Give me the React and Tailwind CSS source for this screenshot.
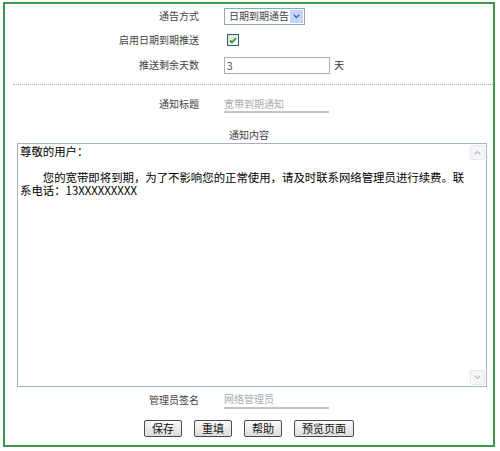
import { useState } from 'react'

const font = 'font-["Noto_Sans_CJK_SC","Noto_Sans",sans-serif]'

function Row({ label, children, className = 'h-[24px]' }) {
  return (
    <div className={`flex items-center ${className}`}>
      <div className="w-[195px] pr-[1px] text-right text-[10px] leading-none text-[#444]">{label}</div>
      <div className="ml-[24px] flex items-center">{children}</div>
    </div>
  )
}

function Chevron({ up }) {
  return (
    <svg width="7" height="5" viewBox="0 0 7 5" className={up ? 'rotate-180' : ''}>
      <path d="M0.8 0.8 L3.5 3.6 L6.2 0.8" fill="none" stroke="currentColor" strokeWidth="1.3" />
    </svg>
  )
}

function Btn({ children }) {
  return (
    <button className="h-[17px] rounded-[2px] border border-[#4a4a4a] bg-gradient-to-b from-[#fbfbfb] to-[#dcdcdc] px-[7px] text-[11px] leading-none text-[#111]">
      {children}
    </button>
  )
}

export default function App() {
  const [enabled, setEnabled] = useState(true)
  const [days, setDays] = useState('3')
  const content =
    '尊敬的用户：\n\n　　您的宽带即将到期，为了不影响您的正常使用，请及时联系网络管理员进行续费。联\n系电话：13XXXXXXXXX'

  return (
    <div className={`h-[451px] w-[500px] bg-white pl-[3px] pt-[2px] ${font}`}>
      <div className="flex h-[445px] w-[492px] flex-col border-2 border-[#3d9a4b]">
        <Row label="通告方式">
          <div className="flex h-[17px] w-[81px] items-center border border-[#8ea6c2] bg-white">
            <span className="flex-1 whitespace-nowrap pl-[4px] text-[10px] leading-none text-[#444]">日期到期通告</span>
            <span className="mr-[1px] flex h-[13px] w-[13px] items-center justify-center bg-[#c4d5fa] text-[#3a5aa8]">
              <Chevron />
            </span>
          </div>
        </Row>
        <Row label="启用日期到期推送">
          <button
            onClick={() => setEnabled(!enabled)}
            className="ml-[3px] flex h-[12px] w-[12px] items-center justify-center border border-[#2b5b7d] bg-gradient-to-br from-[#dcdcd8] to-white"
          >
            {enabled && (
              <svg width="8" height="7" viewBox="0 0 8 7">
                <path d="M1 3.5 L3 5.5 L7 1" fill="none" stroke="#22a022" strokeWidth="1.8" />
              </svg>
            )}
          </button>
        </Row>
        <Row label="推送剩余天数" className="h-[26px]">
          <input
            value={days}
            onChange={(e) => setDays(e.target.value)}
            className="h-[17px] w-[106px] border border-[#a9b3bd] px-[2px] text-[10px] leading-none text-[#444] outline-none"
          />
          <span className="ml-[4px] text-[10px] leading-none text-[#333]">天</span>
        </Row>
        <div className="ml-[8px] mt-[6px] border-t border-dotted border-[#9cbf9c]" />
        <Row label="通知标题" className="mt-[7px] h-[24px]">
          <input
            placeholder="宽带到期通知"
            className="h-[18px] w-[105px] border-b-2 border-[#c4c4c4] px-0 text-[10px] leading-none text-[#555] outline-none placeholder:text-[#aaa]"
          />
        </Row>
        <div className="mt-[11px] h-[16px] text-center text-[10px] leading-[16px] text-[#444]">通知内容</div>
        <div className="ml-[12px] flex h-[244px] w-[470px] border border-[#a4b3c3] bg-white">
          <textarea
            readOnly
            wrap="off"
            defaultValue={content}
            className="flex-1 resize-none overflow-hidden px-[2px] pt-[1px] text-[11.4px] leading-[13px] text-black outline-none"
          />
          <div className="flex w-[16px] flex-col justify-between py-[1px] pr-[1px]">
            <div className="flex h-[15px] items-center justify-center rounded-[2px] border border-[#e4e8ee] bg-[#f4f6f8] text-[#b8bec6]">
              <Chevron up />
            </div>
            <div className="flex h-[15px] items-center justify-center rounded-[2px] border border-[#e4e8ee] bg-[#f4f6f8] text-[#b8bec6]">
              <Chevron />
            </div>
          </div>
        </div>
        <Row label="管理员签名" className="h-[25px]">
          <input
            placeholder="网络管理员"
            className="h-[18px] w-[105px] border-b-2 border-[#c4c4c4] px-0 text-[10px] leading-none text-[#555] outline-none placeholder:text-[#aaa]"
          />
        </Row>
        <div className="mt-[8px] flex justify-center gap-[12px]">
          <Btn>保存</Btn>
          <Btn>重填</Btn>
          <Btn>帮助</Btn>
          <Btn>预览页面</Btn>
        </div>
      </div>
    </div>
  )
}
